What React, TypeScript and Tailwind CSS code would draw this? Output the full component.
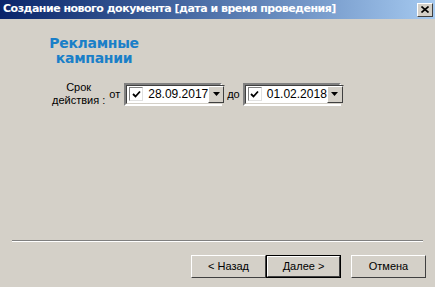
import React from 'react'

function DatePicker({ value }: { value: string }) {
  return (
    <div className="flex h-[23px] w-[98px] border-2 border-t-[#808080] border-l-[#808080] border-b-white border-r-white">
      <div className="flex flex-1 items-center border border-t-[#404040] border-l-[#404040] border-b-[#d4d0c8] border-r-[#d4d0c8] bg-white">
        <div className="ml-[2px] flex h-[14px] w-[14px] items-center justify-center border border-t-[#808080] border-l-[#808080] border-b-[#e0e0e0] border-r-[#e0e0e0] bg-white">
          <svg width="9" height="9" viewBox="0 0 9 9">
            <path d="M1 4 L3.5 6.5 L8 1.5" stroke="#000" strokeWidth="1.8" fill="none" />
          </svg>
        </div>
        <span className="ml-[5px] flex-1 text-[12px] leading-none text-black">{value}</span>
        <div className="flex h-[17px] w-[16px] items-center justify-center border border-t-white border-l-white border-b-[#404040] border-r-[#404040] bg-[#d4d0c8]">
          <svg width="7" height="4" viewBox="0 0 7 4">
            <path d="M0 0 H7 L3.5 4 Z" fill="#000" />
          </svg>
        </div>
      </div>
    </div>
  )
}

function Btn({ label, primary }: { label: string; primary?: boolean }) {
  return (
    <div className={`h-[23px] w-[75px] ${primary ? 'border border-black' : ''}`}>
      <div className="flex h-full w-full items-center justify-center border border-t-white border-l-white border-b-[#404040] border-r-[#404040] bg-[#d4d0c8] text-[11px] text-black">
        {label}
      </div>
    </div>
  )
}

export default function App() {
  return (
    <div className="flex h-[287px] w-[435px] flex-col bg-[#d4d0c8] font-['Liberation_Sans',Arial,sans-serif]">
      {/* Title bar */}
      <div className="flex h-[19px] items-center bg-gradient-to-r from-[#0a246a] to-[#a6caf0] pl-[3px] pr-[2px]">
        <span className="flex-1 font-['DejaVu_Sans',sans-serif] text-[11px] font-bold text-white tracking-[-0.5px]">
          Создание нового документа [дата и время проведения]
        </span>
        <div className="flex h-[14px] w-[16px] items-center justify-center border border-t-white border-l-white border-b-[#404040] border-r-[#404040] bg-[#d4d0c8]">
          <svg width="8" height="7" viewBox="0 0 8 7">
            <path d="M0.5 0.5 L7.5 6.5 M7.5 0.5 L0.5 6.5" stroke="#000" strokeWidth="1.6" />
          </svg>
        </div>
      </div>

      {/* Heading */}
      <div className="ml-[48px] mt-[17px] w-[92px] text-center font-['DejaVu_Sans',sans-serif] text-[14px] font-bold leading-[15px] tracking-[-0.3px] text-[#1a7fc8]">
        Рекламные кампании
      </div>

      {/* Date range */}
      <div className="ml-[52px] mt-[15px] flex items-center">
        <div className="text-center text-[11px] leading-[13px] text-black">
          Срок
          <br />
          действия :
        </div>
        <span className="ml-[4px] mr-[4px] text-[11px] text-black">от</span>
        <DatePicker value="28.09.2017" />
        <span className="ml-[5px] mr-[3px] text-[11px] text-black">до</span>
        <DatePicker value="01.02.2018" />
      </div>

      <div className="flex-1" />

      {/* Separator */}
      <div className="mx-[12px] border-t border-b border-t-[#808080] border-b-white" />

      {/* Buttons */}
      <div className="mb-[9px] mr-[9px] mt-[13px] flex justify-end">
        <Btn label="< Назад" />
        <Btn label="Далее >" primary />
        <div className="w-[10px]" />
        <Btn label="Отмена" />
      </div>
    </div>
  )
}
